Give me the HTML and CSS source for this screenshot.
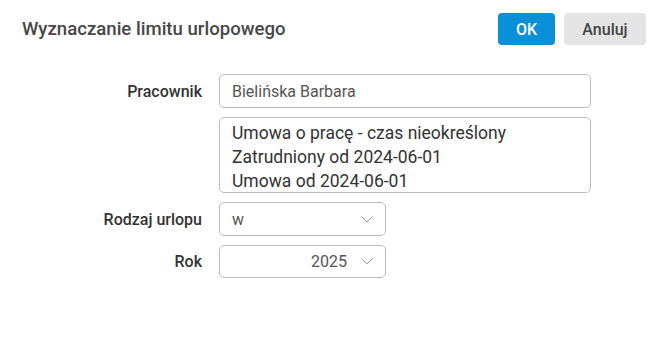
FILE: index.html
```html
<!DOCTYPE html>
<html lang="pl">
<head>
    <meta charset="UTF-8">
    <meta name="viewport" content="width=device-width, initial-scale=1.0">
    <title>Wyznaczanie limitu urlopowego</title>
    <link rel="stylesheet" href="styles.css">
</head>
<body>
    <div class="dialog">
        <div class="header">
            <h1>Wyznaczanie limitu urlopowego</h1>
            <div class="actions">
                <button class="btn btn-ok">OK</button>
                <button class="btn btn-cancel">Anuluj</button>
            </div>
        </div>

        <div class="form">
            <label class="label">Pracownik</label>
            <div class="field wide">Bielińska Barbara</div>

            <div></div> <!-- no label for contract info -->
            <div class="field wide info">
                Umowa o pracę - czas nieokreślony<br>
                Zatrudniony od 2024-06-01<br>
                Umowa od 2024-06-01
            </div>

            <label class="label">Rodzaj urlopu</label>
            <div class="field select">
                <span class="value">w</span>
                <svg class="chevron" width="12" height="7" viewBox="0 0 12 7"><path d="M0.5 0.5 L6 6 L11.5 0.5" fill="none" stroke="#9a9a9a" stroke-width="1"/></svg>
            </div>

            <label class="label">Rok</label>
            <div class="field select year">
                <span class="value">2025</span>
                <svg class="chevron" width="12" height="7" viewBox="0 0 12 7"><path d="M0.5 0.5 L6 6 L11.5 0.5" fill="none" stroke="#9a9a9a" stroke-width="1"/></svg>
            </div>
        </div>
    </div>
</body>
</html>
```

FILE: styles.css
```css
body {
    margin: 0;
    font-family: Roboto, "Liberation Sans", sans-serif;
    background-color: #fff;
    color: #333;
}
.header {
    display: flex;
    justify-content: space-between;
    align-items: center;
    padding: 13px 25px 0 22px;
}
.header h1 {
    margin: 0;
    font-size: 18.6px;
    font-weight: 500;
    color: #474747;
}
.actions {
    display: flex;
    gap: 9px;
}
.btn {
    height: 32px;
    border: none;
    border-radius: 4px;
    font-family: inherit;
    font-size: 16px;
    font-weight: 500;
    cursor: pointer;
}
.btn-ok {
    width: 57px;
    background-color: #0a8fd9;
    color: #fff;
}
.btn-cancel {
    width: 82px;
    background-color: #e4e4e4;
    color: #444;
}
.form {
    display: grid;
    grid-template-columns: 202px 372px;
    column-gap: 17px;
    row-gap: 9px;
    margin-top: 29px;
    align-items: center;
}
.label {
    text-align: right;
    font-size: 16px;
    font-weight: 500;
    color: #333;
}
.field {
    box-sizing: border-box;
    border: 1px solid #bdbdbd;
    border-radius: 5px;
    height: 34px;
    padding: 0 12px;
    display: flex;
    align-items: center;
    font-size: 16px;
    color: #555;
}
.field.info {
    display: block;
    height: 76px;
    padding: 3px 12px;
    font-size: 17.5px;
    line-height: 24px;
    color: #333;
}
.field.select {
    width: 167px;
    justify-content: space-between;
    padding-right: 12px;
}
.field.select .value {
    flex: 1;
}
.field.year {
    height: 33px;
}
.field.year .value {
    text-align: right;
    padding-right: 14px;
    font-size: 16px;
}
```
